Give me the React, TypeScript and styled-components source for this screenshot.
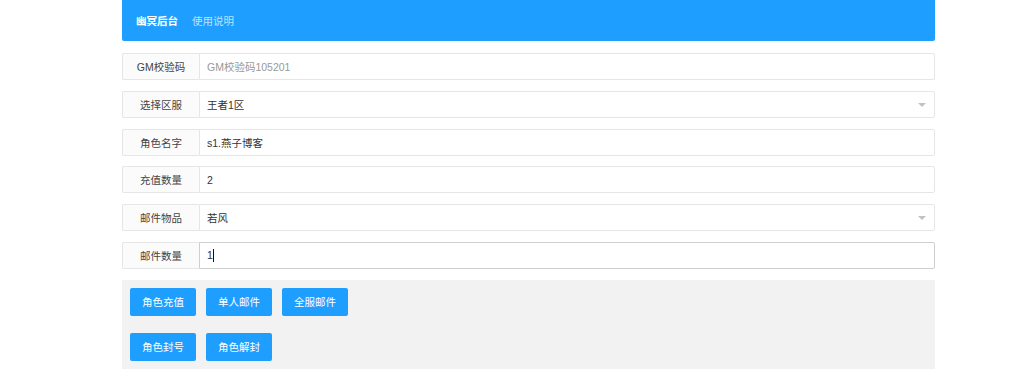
import React from 'react';
import styled, { createGlobalStyle } from 'styled-components';

const GlobalStyle = createGlobalStyle`
  html, body {
    margin: 0;
    padding: 0;
    background: #fff;
    font-family: "Liberation Sans", "Noto Sans CJK SC", sans-serif;
    font-size: 10.5px;
    color: #333;
  }
`;

const Page = styled.div`
  width: 813px;
  margin-left: 122px;
`;

const Header = styled.div`
  height: 41px;
  background: #1e9fff;
  border-radius: 0 0 2px 2px;
  display: flex;
  align-items: center;
  padding-left: 14px;
  gap: 14px;
  margin-bottom: 12px;
`;

const NavItem = styled.span<{ $active?: boolean }>`
  color: ${(p) => (p.$active ? '#fff' : 'rgba(255,255,255,0.7)')};
  font-weight: ${(p) => (p.$active ? 700 : 400)};
  font-size: 10.5px;
`;

const Row = styled.div`
  display: flex;
  height: 27px;
  margin-bottom: 10.8px;
  &:last-of-type {
    margin-bottom: 10px;
  }
`;

const Label = styled.label`
  width: 77px;
  box-sizing: border-box;
  flex-shrink: 0;
  display: flex;
  align-items: center;
  justify-content: center;
  background: #fbfbfb;
  border: 1px solid #e6e6e6;
  border-right: none;
  border-radius: 2px 0 0 2px;
  color: #444;
`;

const Field = styled.div`
  position: relative;
  flex: 1;
  display: flex;
`;

const Input = styled.input<{ $focused?: boolean }>`
  flex: 1;
  box-sizing: border-box;
  height: 100%;
  border: 1px solid ${(p) => (p.$focused ? '#cfcfcf' : '#e6e6e6')};
  border-radius: 0 2px 2px 0;
  padding: 0 7px;
  font: inherit;
  color: #333;
  background: #fff;
  outline: none;
  caret-color: #000;
  &::placeholder {
    color: #999;
  }
`;

/* static text caret drawn over the focused input, since the headless page has no blinking caret */
const Caret = styled.span`
  position: absolute;
  left: 14px;
  top: 7px;
  width: 1px;
  height: 13px;
  background: #111;
`;

const Arrow = styled.i`
  position: absolute;
  right: 9px;
  top: 12px;
  width: 0;
  height: 0;
  border-left: 4px solid transparent;
  border-right: 4px solid transparent;
  border-top: 4px solid #c2c2c2;
`;

const ActionBox = styled.div`
  background: #f2f2f2;
  padding: 8px;
  display: flex;
  flex-direction: column;
  gap: 17px;
`;

const ButtonRow = styled.div`
  display: flex;
  gap: 10px;
`;

const Button = styled.button`
  width: 66px;
  height: 28px;
  border: none;
  border-radius: 2px;
  background: #1e9fff;
  color: #fff;
  font: inherit;
  padding: 0;
  cursor: pointer;
`;

type FieldDef = {
  label: string;
  value?: string;
  placeholder?: string;
  select?: boolean;
  focused?: boolean;
};

const fields: FieldDef[] = [
  { label: 'GM校验码', placeholder: 'GM校验码105201' },
  { label: '选择区服', value: '王者1区', select: true },
  { label: '角色名字', value: 's1.燕子博客' },
  { label: '充值数量', value: '2' },
  { label: '邮件物品', value: '若风', select: true },
  { label: '邮件数量', value: '1', focused: true },
];

const buttonRows = [
  ['角色充值', '单人邮件', '全服邮件'],
  ['角色封号', '角色解封'],
];

export default function App() {
  return (
    <>
      <GlobalStyle />
      <Page>
        <Header>
          <NavItem $active>幽冥后台</NavItem>
          <NavItem>使用说明</NavItem>
        </Header>
        <form onSubmit={(e) => e.preventDefault()}>
          {fields.map((f) => (
            <Row key={f.label}>
              <Label>{f.label}</Label>
              <Field>
                <Input
                  defaultValue={f.value}
                  placeholder={f.placeholder}
                  readOnly={f.select}
                  $focused={f.focused}
                />
                {f.select && <Arrow />}
                {f.focused && <Caret />}
              </Field>
            </Row>
          ))}
          <ActionBox>
            {buttonRows.map((row, i) => (
              <ButtonRow key={i}>
                {row.map((b) => (
                  <Button key={b} type="button">{b}</Button>
                ))}
              </ButtonRow>
            ))}
          </ActionBox>
        </form>
      </Page>
    </>
  );
}
